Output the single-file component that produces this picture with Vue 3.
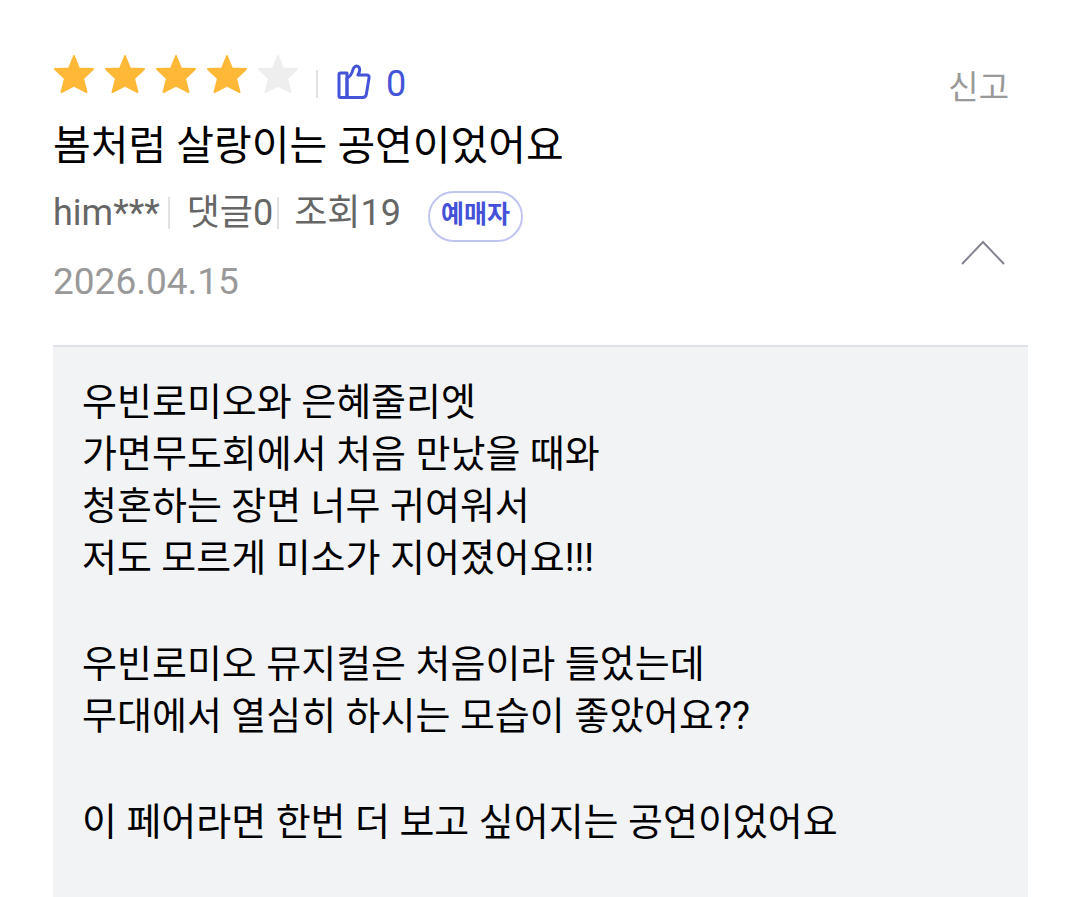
<script setup>
import { ref } from 'vue'

const open = ref(true)
const score = 4
const paragraphs = [
  ['우빈로미오와 은혜줄리엣', '가면무도회에서 처음 만났을 때와', '청혼하는 장면 너무 귀여워서', '저도 모르게 미소가 지어졌어요!!!'],
  ['우빈로미오 뮤지컬은 처음이라 들었는데', '무대에서 열심히 하시는 모습이 좋았어요??'],
  ['이 페어라면 한번 더 보고 싶어지는 공연이었어요'],
]
</script>

<template>
  <article class="review">
    <header class="head">
      <div class="summary">
        <div class="rating">
          <div class="stars" role="img" aria-label="5점 만점에 4점">
            <svg v-for="n in 5" :key="n" class="star" :class="{ off: n > score }" viewBox="0 0 42 40">
              <path d="M21 2 26 14.500 40 15 30 24.500 33.500 38 21 31.500 8.500 38 12 24.500 2 15 16 14.500Z" />
            </svg>
          </div>
          <span class="bar tall"></span>
          <button class="like" type="button" aria-label="추천 0">
            <svg class="thumb" viewBox="0 0 34 36">
              <path d="M2 10.500Q2 9 3.500 9H10V33.500H3.500Q2 33.500 2 32Z" />
              <path d="M10 14C13.500 12.500 15 9.500 16 5.500C17 2.500 19 1.300 21 2.300C23.500 3.500 23 7 21 11H29.500Q32.500 11 32 14L29.300 30.500Q28.800 33.500 25.500 33.500H12.500Q10 33.500 10 31Z" />
            </svg>
            <span class="count">0</span>
          </button>
        </div>
        <h1 class="title">봄처럼 살랑이는 공연이었어요</h1>
        <div class="meta">
          <span>him***</span>
          <span class="bar first"></span>
          <span>댓글0</span>
          <span class="bar second"></span>
          <span>조회19</span>
          <span class="badge">예매자</span>
        </div>
        <time class="date" datetime="2026-04-15">2026.04.15</time>
      </div>
      <div class="actions">
        <button class="report" type="button">신고</button>
        <button class="toggle" type="button" :aria-expanded="open" aria-label="접기" @click="open = !open">
          <svg class="chevron" :class="{ closed: !open }" viewBox="0 0 46 26"><path d="M2 24 23 2 44 24" /></svg>
        </button>
      </div>
    </header>
    <section v-if="open" class="content">
      <p v-for="(lines, i) in paragraphs" :key="i">
        <span v-for="line in lines" :key="line" class="line">{{ line }}</span>
      </p>
    </section>
  </article>
</template>

<style>
body {
  margin: 0;
  background: #fff;
}
</style>

<style scoped>
.review {
  display: flex;
  flex-direction: column;
  box-sizing: border-box;
  min-height: 100vh;
  padding: 52px 52px 0 53px;
  font-family: Roboto, "Noto Sans CJK KR", sans-serif;
  color: #000;
}
button {
  padding: 0;
  border: 0;
  background: none;
  font: inherit;
  cursor: pointer;
}
.head {
  display: flex;
  justify-content: space-between;
  min-height: 293px;
}
.rating {
  display: flex;
  height: 60px;
}
.stars {
  display: flex;
  gap: 9px;
}
.star {
  width: 42px;
  height: 44px;
  fill: #ffb937;
  stroke: #ffb937;
  stroke-width: 2;
  stroke-linejoin: round;
}
.star.off {
  fill: #eee;
  stroke: #eee;
}
.bar {
  flex: none;
  width: 2px;
  height: 32px;
  background: #e2e2e2;
}
.tall {
  height: 28px;
  margin: 18px 19px 0 17px;
}
.like {
  display: flex;
  align-items: center;
  gap: 15px;
  height: 60px;
  color: #4454d8;
  font-size: 36px;
  line-height: 56px;
}
.count {
  padding-top: 4px;
}
.thumb {
  width: 34px;
  height: 36px;
  fill: none;
  stroke: currentColor;
  stroke-width: 3;
  stroke-linejoin: round;
}
.title {
  margin: 0;
  font-size: 41px;
  font-weight: 400;
  line-height: 68px;
  white-space: nowrap;
}
.meta {
  display: flex;
  align-items: center;
  height: 66px;
  color: #666;
  font-size: 36px;
  line-height: 66px;
  white-space: nowrap;
}
.first {
  margin: 0 17px 0 8px;
}
.second {
  margin: 0 15px 0 4px;
}
.badge {
  box-sizing: border-box;
  height: 51px;
  margin: 6px 0 0 27px;
  padding: 0 11px;
  border: 2px solid #c0c5f0;
  border-radius: 26px;
  color: #4450d8;
  font-size: 25px;
  font-weight: 700;
  line-height: 43px;
}
.date {
  display: block;
  color: #999;
  font-size: 37px;
  line-height: 72px;
}
.actions {
  display: flex;
  flex-direction: column;
  align-items: flex-end;
  padding: 12px 19px 0 0;
}
.report {
  color: #999;
  font-size: 33px;
  line-height: 48px;
}
.toggle {
  display: flex;
  margin: 128px 3px 0 0;
}
.chevron {
  width: 46px;
  height: 26px;
  fill: none;
  stroke: #858591;
  stroke-width: 2;
}
.chevron.closed {
  transform: rotate(180deg);
}
.content {
  display: flex;
  flex: 1;
  flex-direction: column;
  gap: 54px;
  padding: 29px 29px 48px;
  border-top: 2px solid #dfe1e9;
  background: #f2f3f5;
  font-size: 38px;
  line-height: 52px;
}
.content p {
  margin: 0;
}
.line {
  display: block;
}
</style>
